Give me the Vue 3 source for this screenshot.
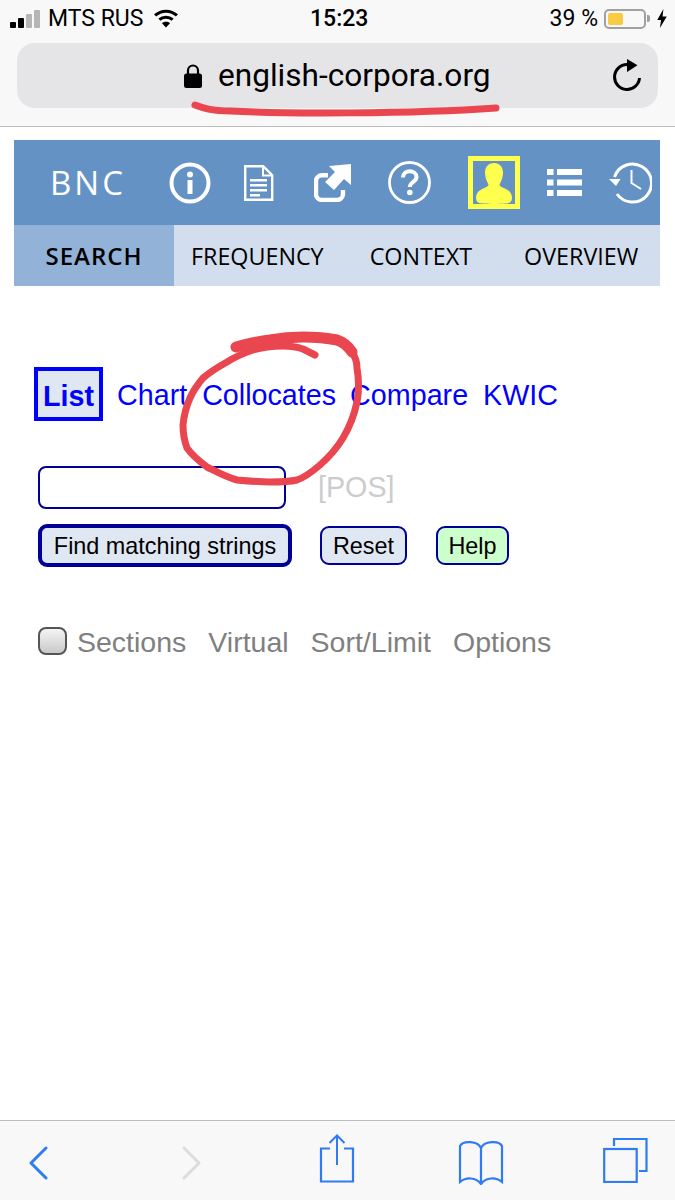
<template>
  <div class="phone">
    <!-- status bar -->
    <div class="status">
      <div class="status-left">
        <div class="signal">
          <i class="on s1"></i><i class="on s2"></i><i class="s3"></i><i class="s4"></i>
        </div>
        <span class="carrier">MTS RUS</span>
        <svg class="wifi" width="26" height="19" viewBox="0 0 26 20">
          <path d="M1.500 6.800C8 .8 18 .8 24.500 6.800" fill="none" stroke="#000" stroke-width="3.200" />
          <path d="M6 11.300c4-3.600 10-3.600 14 0" fill="none" stroke="#000" stroke-width="3.200" />
          <path d="M13 19.500l-4.200-4.600c2.400-2 6-2 8.400 0z" fill="#000" />
        </svg>
      </div>
      <span class="clock">15:23</span>
      <div class="status-right">
        <span class="percent">39 %</span>
        <div class="battery"><div class="charge"></div></div>
        <div class="nub"></div>
        <svg class="bolt" width="10" height="19" viewBox="0 0 10 20">
          <path d="M6.500 0L0 11.500h4L2.800 20 10 8H5.600z" fill="#000" />
        </svg>
      </div>
    </div>

    <!-- address bar -->
    <div class="address-wrap">
      <div class="address">
        <svg class="lock" width="20" height="24" viewBox="0 0 20 24">
          <path d="M5 11V6.500a5 5 0 0 1 10 0V11" fill="none" stroke="#000" stroke-width="2.200" />
          <rect x="1" y="9.500" width="18" height="14.500" rx="2.500" fill="#000" />
        </svg>
        <span class="url">english-corpora.org</span>
        <svg class="reload" width="30" height="38" viewBox="0 0 30 38">
          <path d="M15 9.500A12.500 12.500 0 1 0 27.500 23" fill="none" stroke="#000" stroke-width="3" />
          <path d="M15 4l10.500 6.200L15 17z" fill="#000" />
        </svg>
      </div>
    </div>

    <div class="content">
      <!-- site header -->
      <div class="site-head">
        <span class="brand">BNC</span>
        <svg class="ic-info" width="42" height="42" viewBox="0 0 42 42">
          <circle cx="21" cy="21" r="18.500" fill="none" stroke="#fff" stroke-width="4" />
          <circle cx="21" cy="12.500" r="3" fill="#fff" />
          <rect x="18.500" y="18" width="5" height="14" fill="#fff" />
        </svg>
        <svg class="ic-doc" width="30" height="36" viewBox="0 0 30 36">
          <path d="M1.200 1.200h18l9 9v24.600H1.200z" fill="none" stroke="#fff" stroke-width="2.400" />
          <path d="M19 1.500v9h9" fill="none" stroke="#fff" stroke-width="2" />
          <path d="M6 14h17v2.400H6zM6 19h17v2.400H6zM6 24h17v2.400H6zM6 29h10v2.400H6z" fill="#fff" />
        </svg>
        <svg class="ic-share" width="38" height="38" viewBox="0 0 38 38">
          <path d="M14 11.200H8a6 6 0 0 0-6 6V30a6 6 0 0 0 6 6h15a6 6 0 0 0 6-6v-4" fill="none" stroke="#fff" stroke-width="4.400" />
          <path d="M37 0V21L30 15 20 26 11 18 21 8 15 2z" fill="#fff" />
        </svg>
        <svg class="ic-help" width="43" height="43" viewBox="0 0 43 43">
          <circle cx="21.500" cy="21.500" r="20" fill="none" stroke="#fff" stroke-width="2.800" />
          <path d="M15 16.500c0-8.500 13.500-8 13.500-.5 0 5-6.700 5-6.700 10" fill="none" stroke="#fff" stroke-width="4" />
          <circle cx="21.800" cy="31.500" r="2.800" fill="#fff" />
        </svg>
        <div class="user-box">
          <svg width="36" height="41" viewBox="0 0 36 41">
            <path d="M18 0c5.500 0 9 3.800 9 10 0 4.500-2 9-3.500 11.500 0 3 7.500 3.800 10.500 7.500 2.500 3 3 9-1 11-3 1.200-27 1.200-30 0-4-2-3.500-8-1-11 3-3.700 10.500-4.500 10.500-7.500C11 19 9 14.500 9 10 9 3.800 12.500 0 18 0z" fill="#ffff4d" />
          </svg>
        </div>
        <svg class="ic-list" width="35" height="27" viewBox="0 0 35 27">
          <path d="M0 0h6.500v6H0zM10 0h25v6H10zM0 10.500h6.500v6H0zM10 10.500h25v6H10zM0 21h6.500v6H0zM10 21h25v6H10z" fill="#fff" />
        </svg>
        <svg class="ic-history" width="43" height="42" viewBox="0 0 43 42">
          <path d="M5.500 15A19 19 0 1 1 8 32" fill="none" stroke="#fff" stroke-width="3" />
          <path d="M0 17h11.500l-4.500 7z" fill="#fff" />
          <path d="M22.500 8v13l9.500 6" fill="none" stroke="#fff" stroke-width="2" />
        </svg>
      </div>

      <!-- tabs -->
      <div class="tabs">
        <span class="tab active">SEARCH</span>
        <span class="tab t-freq">FREQUENCY</span>
        <span class="tab t-ctx">CONTEXT</span>
        <span class="tab t-over">OVERVIEW</span>
      </div>
    </div>

    <!-- search form -->
    <div class="form">
      <div class="modes">
        <a class="mode current">List</a>
        <a class="mode m-chart">Chart</a>
        <a class="mode m-coll">Collocates</a>
        <a class="mode m-comp">Compare</a>
        <a class="mode m-kwic">KWIC</a>
      </div>
      <div class="word-row">
        <input class="word" type="text" />
        <span class="pos">[POS]</span>
      </div>
      <div class="buttons">
        <button class="btn btn-find">Find matching strings</button>
        <button class="btn btn-reset">Reset</button>
        <button class="btn btn-help">Help</button>
      </div>
      <div class="options">
        <span class="check"></span>
        <span class="opt o-sec">Sections</span>
        <span class="opt o-vir">Virtual</span>
        <span class="opt o-sort">Sort/Limit</span>
        <span class="opt o-opt">Options</span>
      </div>
    </div>

    <!-- safari toolbar -->
    <div class="toolbar">
      <svg class="tb-back" width="20" height="34" viewBox="0 0 20 34">
        <path d="M18 2L3 17l15 15" fill="none" stroke="#2f7bf6" stroke-width="3" stroke-linecap="round" stroke-linejoin="round" />
      </svg>
      <svg class="tb-next" width="20" height="34" viewBox="0 0 20 34">
        <path d="M3 2l15 15L3 32" fill="none" stroke="#dcdcdc" stroke-width="3" stroke-linecap="round" stroke-linejoin="round" />
      </svg>
      <svg class="tb-share" width="36" height="49" viewBox="0 0 36 49">
        <path d="M11 14.500H2v33h32v-33h-9" fill="none" stroke="#2f7bf6" stroke-width="2.200" />
        <path d="M18 1.500V31M10.500 9L18 1.500 25.500 9" fill="none" stroke="#2f7bf6" stroke-width="2" />
      </svg>
      <svg class="tb-book" width="46" height="45" viewBox="0 0 46 45">
        <path d="M23 8C20 1 5 0 2 6v36c6-5 16-5 21 2 5-7 15-7 21-2V6C41 0 26 1 23 8zM23 8v36" fill="none" stroke="#2f7bf6" stroke-width="2.200" />
      </svg>
      <svg class="tb-tabs" width="45" height="46" viewBox="0 0 45 46">
        <path d="M11 9V2h32.500v32H36" fill="none" stroke="#2f7bf6" stroke-width="2.200" />
        <rect x="1.200" y="12" width="32.500" height="33" fill="none" stroke="#2f7bf6" stroke-width="2.200" />
      </svg>
    </div>

    <!-- red marker scribbles on top of the screenshot -->
    <svg class="marks" width="675" height="1200" viewBox="0 0 675 1200">
      <path d="M195 105c8 3 16 6 36 6 50 3 180 3 265-3" fill="none" stroke="#ea4650" stroke-width="7" stroke-linecap="round" />
      <path d="M352 352c4 6 5 10 5 16 2 12 2 24 0 34-3 14-8 26-14 36-6 10-14 19-23 27-7 6-14 12-23 15-9 2-18 2-27 2-11 0-22-1-33-2-11-3-20-8-30-13-8-6-15-12-20-19-3-8-4-15-4-23 1-10 3-18 7-27 3-7 8-14 13-20 7-6 15-11 24-16 8-5 17-9 26-12 10-3 20-4 30-4 7 0 14 1 20 3 4 2 8 4 12 6"
        fill="none" stroke="#ea4650" stroke-width="7" stroke-linecap="round" stroke-linejoin="round" />
      <path d="M236 347c11-3 23-6 34-7 11-2 22-3 33-3 12 0 24 1 34 3 6 2 11 6 15 12" fill="none" stroke="#ea4650" stroke-width="11" stroke-linecap="round" />
    </svg>
  </div>
</template>

<script setup>
</script>

<style>
html, body { margin: 0; background: #fff; }
</style>

<style scoped>
.phone {
  position: relative;
  width: 675px;
  height: 1200px;
  overflow: hidden;
  display: flex;
  flex-direction: column;
  background: #fff;
  font-family: "Liberation Sans", Arial, sans-serif;
}

/* status bar */
.status {
  height: 43px;
  background: #f8f8f8;
  position: relative;
  display: flex;
  align-items: center;
  justify-content: space-between;
  padding: 0 8px 6px 10px;
  box-sizing: border-box;
  font-family: Roboto, sans-serif;
  font-size: 23px;
  color: #000;
}
.status-left, .status-right { display: flex; align-items: center; }
.signal { display: flex; align-items: flex-end; gap: 2px; width: 38px; height: 18px; }
.signal i { display: block; width: 6px; background: #b5b5b5; border-radius: 1px; }
.signal .on { background: #000; }
.s1 { height: 6px; }
.s2 { height: 10px; }
.s3 { height: 14px; }
.s4 { height: 18px; }
.wifi { margin-left: 10px; }
.clock { font-weight: 500; font-size: 23px; position: absolute; left: 310px; }
.percent { margin-right: 6px; }
.battery {
  width: 42px;
  height: 20px;
  box-sizing: border-box;
  border: 2px solid #a0a0a0;
  border-radius: 5px;
  padding: 2px;
}
.charge { width: 15px; height: 100%; background: #f8cb42; border-radius: 2px; }
.nub { width: 3px; height: 7px; background: #a0a0a0; margin-left: 1px; border-radius: 0 2px 2px 0; }
.bolt { margin-left: 7px; }

/* address bar */
.address-wrap {
  height: 84px;
  background: #f8f8f8;
  border-bottom: 1px solid #bdbdbd;
  box-sizing: border-box;
  padding: 0 17px;
}
.address {
  height: 65px;
  background: #e5e5e8;
  border-radius: 18px;
  position: relative;
  display: flex;
  align-items: center;
  padding-left: 166px;
}
.url {
  margin-left: 15px;
  font-family: Roboto, sans-serif;
  font-size: 31.600px;
  color: #000;
}
.reload { position: absolute; right: 16px; top: 12px; }

/* site header */
.content { padding: 13px 15px 0 14px; }
.site-head {
  height: 85px;
  background: #6592c4;
  display: flex;
  align-items: center;
}
.brand {
  width: 155px;
  box-sizing: border-box;
  padding-left: 36px;
  font-family: "Open Sans", "Noto Sans", sans-serif;
  font-size: 33px;
  letter-spacing: 3px;
  color: #fff;
}
.ic-doc { margin-left: 33px; }
.ic-share { margin-left: 40px; }
.ic-help { margin-left: 36px; }
.user-box {
  margin-left: 37px;
  width: 52px;
  height: 53px;
  box-sizing: border-box;
  border: 5px solid #ffff4d;
  display: flex;
  align-items: flex-end;
  justify-content: center;
  flex: none;
}
.ic-list { margin-left: 27px; }
.ic-history { margin-left: 27px; }

/* tabs */
.tabs {
  height: 61px;
  background: #d2deee;
  display: flex;
  align-items: center;
  font-family: "Open Sans", "Noto Sans", sans-serif;
  font-size: 23.300px;
  color: #000;
}
.tab { display: block; }
.active {
  width: 160px;
  height: 100%;
  line-height: 61px;
  text-align: center;
  background: #93b2d8;
  font-size: 24px;
  font-weight: 600;
  letter-spacing: 1px;
  box-sizing: border-box;
}
.t-freq { margin-left: 17px; }
.t-ctx { margin-left: 46px; }
.t-over { margin-left: 52px; }

/* form */
.form { padding: 81px 0 0 34px; }
.modes { display: flex; align-items: center; height: 54px; font-size: 28.700px; color: #00f; }
.mode { display: block; padding-top: 2px; }
.current {
  width: 69px;
  height: 54px;
  padding-top: 0;
  line-height: 50px;
  box-sizing: border-box;
  border: 4px solid #00f;
  background: #dfe7f3;
  font-weight: 700;
  text-align: center;
}
.m-chart { margin-left: 14px; }
.m-coll { margin-left: 15px; }
.m-comp { margin-left: 14px; }
.m-kwic { margin-left: 15px; }

.word-row { display: flex; align-items: center; margin: 45px 0 0 4px; }
.word {
  width: 248px;
  height: 43px;
  box-sizing: border-box;
  border: 2px solid #000099;
  border-radius: 8px;
  background: #fff;
  padding: 0;
}
.pos { margin-left: 32px; font-size: 28.700px; color: #ccc; }

.buttons { display: flex; align-items: center; margin: 15px 0 0 4px; }
.btn {
  font-family: "Liberation Sans", Arial, sans-serif;
  font-size: 23.400px;
  color: #000;
  background: #dfe7f3;
  border: 2px solid #000099;
  border-radius: 9px;
  padding: 2px 0 0;
  height: 39px;
  box-sizing: border-box;
}
.btn-find { width: 254px; height: 43px; border-width: 4px; }
.btn-reset { width: 87px; margin-left: 28px; }
.btn-help { width: 73px; margin-left: 29px; background: #ccffcc; }

.options { display: flex; align-items: center; margin: 59px 0 0 4px; font-size: 28.500px; color: #808080; }
.check {
  width: 29px;
  height: 28px;
  margin-top: -3px;
  box-sizing: border-box;
  border: 2px solid #555;
  border-radius: 8px;
  background: linear-gradient(#f4f4f4, #c9c9c9);
}
.o-sec { margin-left: 10px; }
.o-vir { margin-left: 22px; }
.o-sort { margin-left: 22px; }
.o-opt { margin-left: 22px; }

/* safari toolbar */
.toolbar {
  margin-top: auto;
  height: 80px;
  box-sizing: border-box;
  background: #f8f8f8;
  border-top: 1px solid #bdbdbd;
  display: flex;
  align-items: flex-start;
  padding-left: 28px;
}
.toolbar svg { flex: none; }
.tb-back { margin-top: 25px; }
.tb-next { margin-left: 133px; margin-top: 25px; }
.tb-share { margin-left: 118px; margin-top: 13px; }
.tb-book { margin-left: 103px; margin-top: 19px; }
.tb-tabs { margin-left: 99px; margin-top: 16px; }

.marks { position: absolute; left: 0; top: 0; pointer-events: none; }
</style>
